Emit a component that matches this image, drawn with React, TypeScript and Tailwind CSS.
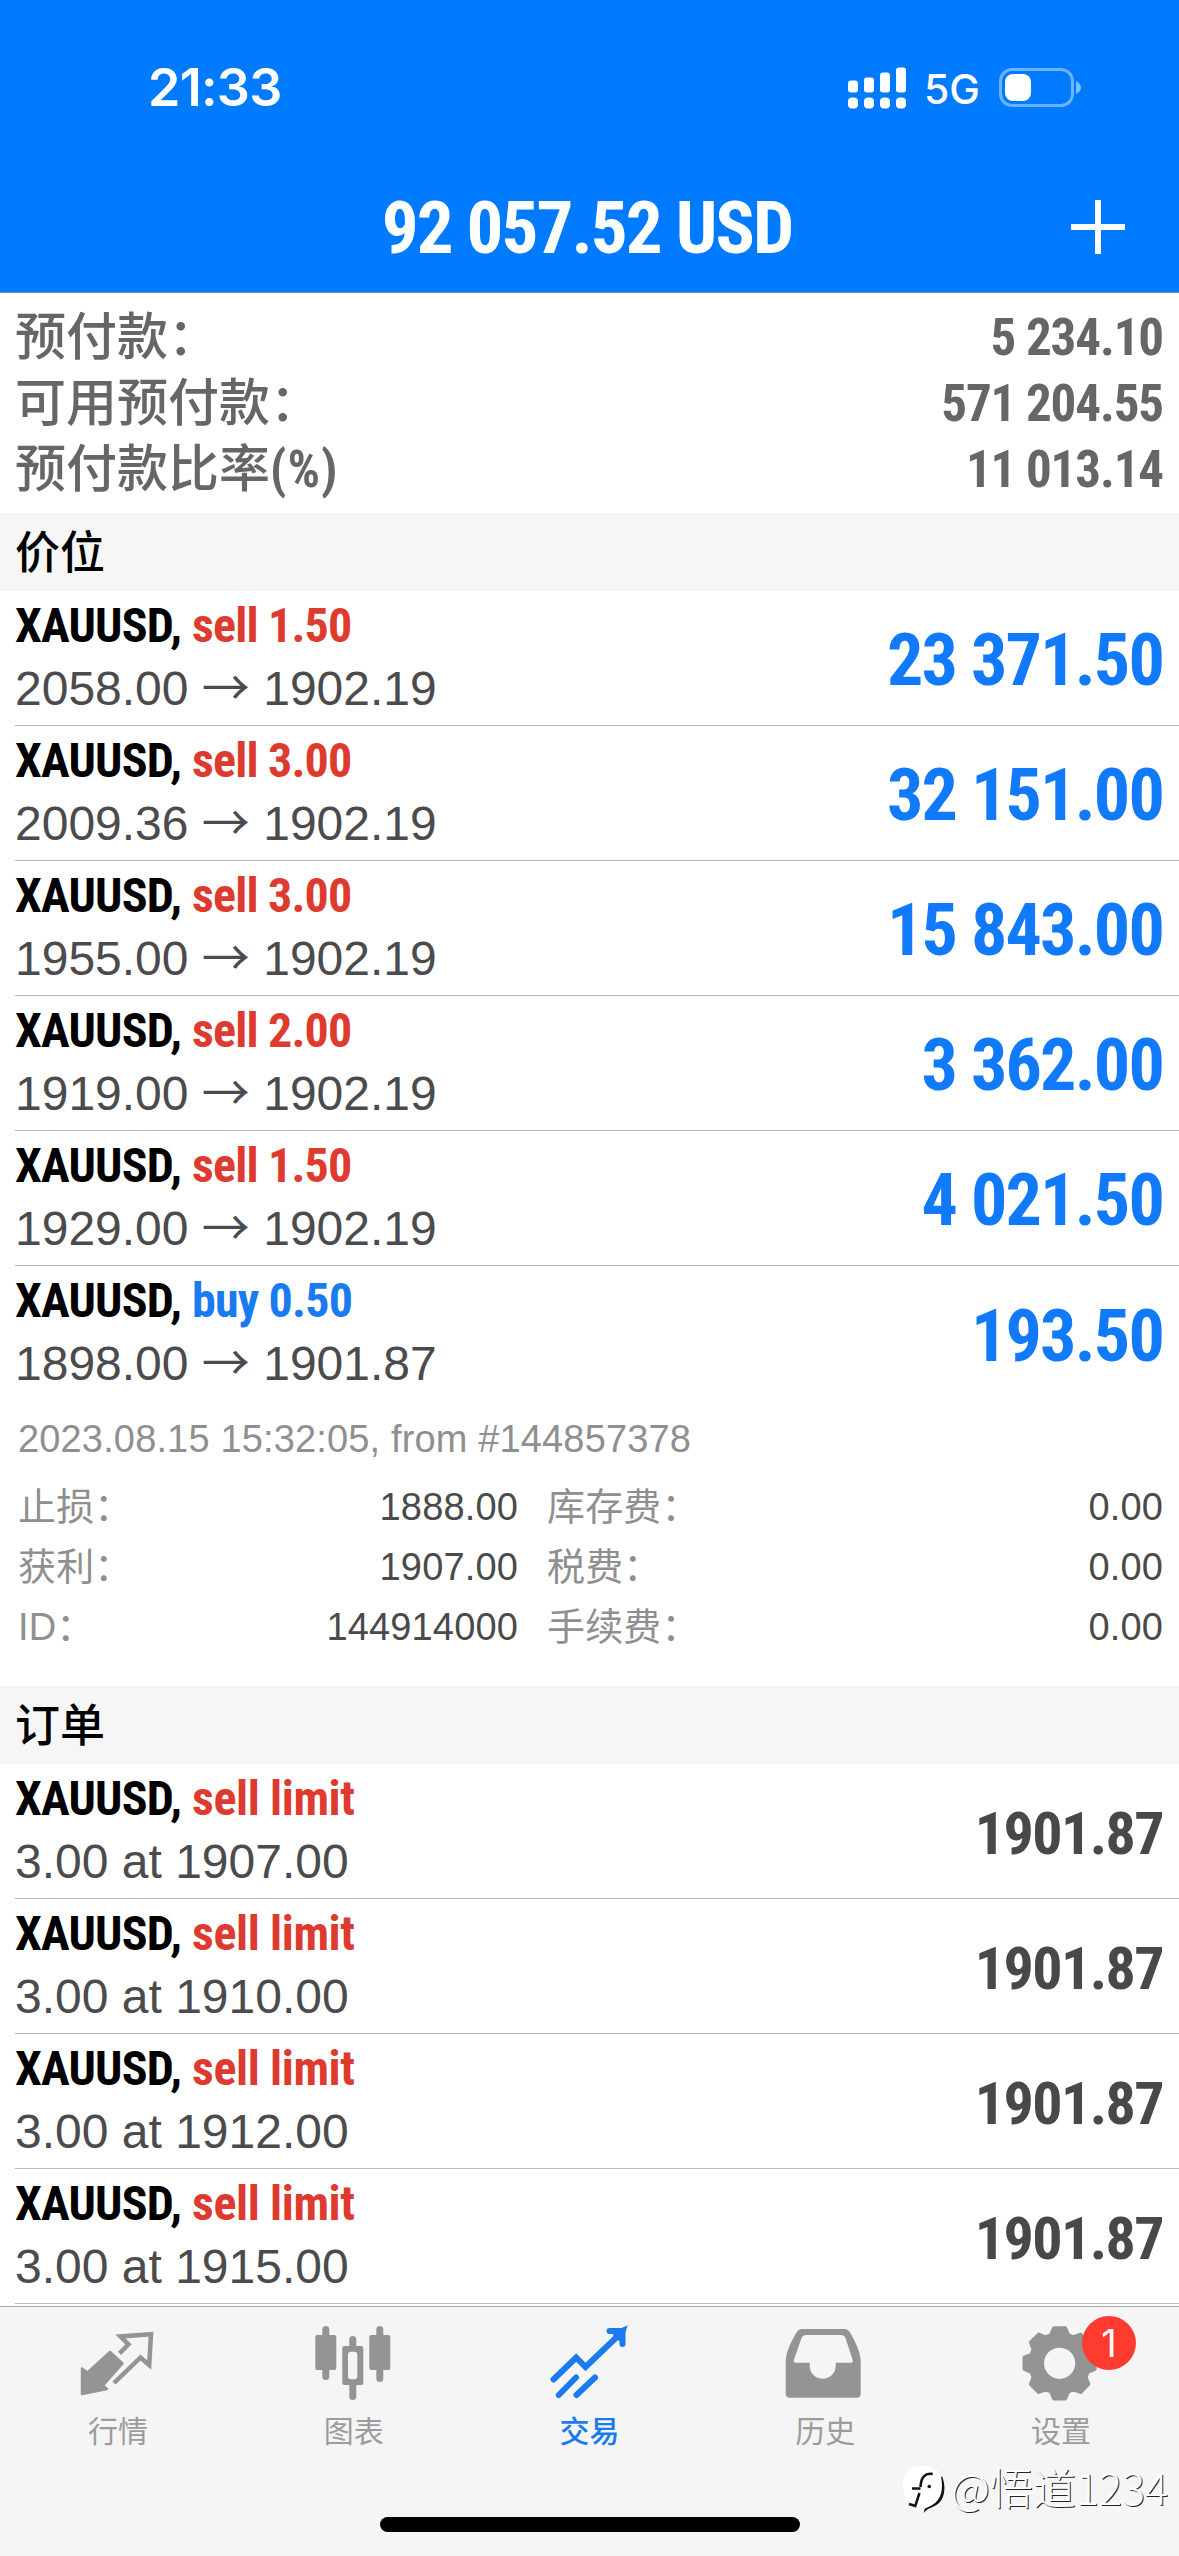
import { ReactNode } from "react";

interface Position {
  action: string;
  side: "sell" | "buy";
  open: string;
  current: string;
  profit: string;
}

interface PendingOrder {
  volume: string;
  price: string;
  current: string;
}

const SUMMARY = [
  { label: "预付款：", value: "5 234.10" },
  { label: "可用预付款：", value: "571 204.55" },
  { label: "预付款比率", unit: "(%)", value: "11 013.14" },
];

const POSITIONS: Position[] = [
  { action: "sell 1.50", side: "sell", open: "2058.00", current: "1902.19", profit: "23 371.50" },
  { action: "sell 3.00", side: "sell", open: "2009.36", current: "1902.19", profit: "32 151.00" },
  { action: "sell 3.00", side: "sell", open: "1955.00", current: "1902.19", profit: "15 843.00" },
  { action: "sell 2.00", side: "sell", open: "1919.00", current: "1902.19", profit: "3 362.00" },
  { action: "sell 1.50", side: "sell", open: "1929.00", current: "1902.19", profit: "4 021.50" },
  { action: "buy 0.50", side: "buy", open: "1898.00", current: "1901.87", profit: "193.50" },
];

const DETAILS = [
  ["止损：", "1888.00", "库存费：", "0.00"],
  ["获利：", "1907.00", "税费：", "0.00"],
  ["ID：", "144914000", "手续费：", "0.00"],
];

const ORDERS: PendingOrder[] = [
  { volume: "3.00", price: "1907.00", current: "1901.87" },
  { volume: "3.00", price: "1910.00", current: "1901.87" },
  { volume: "3.00", price: "1912.00", current: "1901.87" },
  { volume: "3.00", price: "1915.00", current: "1901.87" },
];

const SIDE_COLORS = {
  sell: "text-[#de3b30]",
  buy: "text-[#1a7af0]",
};

const CONDENSED = "font-['Roboto_Condensed','Noto_Sans_CJK_SC',sans-serif] font-bold";
const REGULAR = "font-['Liberation_Sans','Noto_Sans_CJK_SC',sans-serif]";

// 8-tooth gear outline
function gearPath(cx: number, cy: number): string {
  const points: string[] = [];
  for (let i = 0; i < 8; i++) {
    for (const [offset, r] of [[-17, 29.5], [-9, 35.5], [9, 35.5], [17, 29.5]]) {
      const a = ((i * 45 + offset - 90) * Math.PI) / 180;
      points.push(`${(cx + r * Math.cos(a)).toFixed(1)} ${(cy + r * Math.sin(a)).toFixed(1)}`);
    }
  }
  return `M${points.join("L")}Z`;
}

function QuotesIcon() {
  return (
    <svg viewBox="0 0 80 80" className="size-20" strokeLinejoin="round">
      <path
        d="M4 46.500L9.500 50.500 32 30 44.500 41.500 25 63.300 29 67 4 72Z"
        fill="currentColor"
        stroke="currentColor"
        strokeWidth="2.5"
      />
      <path
        d="M41.500 31.300L50.500 22.300 42.500 14.500 73 12.300 71.200 43 62.500 35.500 36 61"
        fill="none"
        stroke="currentColor"
        strokeWidth="4.500"
        strokeLinejoin="miter"
      />
    </svg>
  );
}

function ChartIcon() {
  return (
    <svg viewBox="0 0 80 80" className="size-20" fill="currentColor">
      <rect x="1.3" y="13" width="21" height="35" rx="2" />
      <rect x="8.3" y="4" width="7" height="54" rx="3.5" />
      <path
        fillRule="evenodd"
        d="M30.3 24h17a2 2 0 0 1 2 2v35a2 2 0 0 1-2 2h-17a2 2 0 0 1-2-2v-35a2 2 0 0 1 2-2ZM37 29.7a3 3 0 0 0-3 3v21.6a3 3 0 0 0 3 3h3.3a3 3 0 0 0 3-3v-21.6a3 3 0 0 0-3-3Z"
      />
      <path d="M35.3 26v-8.5a3.5 3.5 0 0 1 7 0v8.5ZM35.3 61v13.5a3.5 3.5 0 0 0 7 0v-13.5Z" />
      <rect x="55.3" y="13" width="21" height="35" rx="2" />
      <rect x="62.3" y="4" width="7" height="56" rx="3.5" />
    </svg>
  );
}

function TradeIcon() {
  return (
    <svg viewBox="0 0 80 80" className="size-20" fill="none" stroke="currentColor" strokeWidth="6" strokeLinecap="round">
      <path d="M4.500 57.500L27.200 35.500 36.500 45 72 11" />
      <path d="M60.500 9H73.500V22" />
      <path d="M67 12L73.500 9 71 16" />
      <path d="M9.800 73L27 55.500M27.500 73L46 55.500" />
    </svg>
  );
}

function HistoryIcon() {
  return (
    <svg viewBox="0 0 80 80" className="size-20" fill="currentColor">
      <path
        fillRule="evenodd"
        d="M17 7H59.5Q63 7 65 10.5C70 19 75.7 30 75.7 40V71.5Q75.7 75.7 71.5 75.7H5Q.7 75.7 .7 71.5V40C.7 30 6.500 19 11.500 10.500Q13.500 7 17 7ZM21 13Q18 13 16.500 16L9 37.500Q8 40.700 11 40.700H24.700V43.700A13 13 0 0 0 50.700 43.700V40.700H65.500Q68.500 40.700 67.500 37.500L60.500 16Q59 13 56 13Z"
      />
    </svg>
  );
}

function SettingsIcon() {
  return (
    <svg viewBox="0 0 80 80" className="size-20">
      <path d={gearPath(38.6, 41.3)} fill="currentColor" stroke="currentColor" strokeWidth="4" strokeLinejoin="round" />
      <circle cx="38.6" cy="41.3" r="15.6" fill="#f5f5f5" />
    </svg>
  );
}

function StatusBar() {
  return (
    <div className="flex h-[174px] items-start justify-between pt-[56px] pr-[96px] pl-[148px] text-white">
      <div className="h-16 font-['Inter',sans-serif] text-[52px] leading-[64px] font-semibold tracking-[-0.7px]">
        21:33
      </div>
      <div className="flex h-16 items-center">
        <svg viewBox="0 0 58 42" className="h-[42px] w-[58px]" fill="currentColor">
          {[12, 15, 20, 25].map((h, i) => (
            <g key={h}>
              <rect x={i * 16} y={25.5 - h} width="10" height={h} rx="3" />
              <rect x={i * 16} y="30.5" width="10" height="11" rx="4" />
            </g>
          ))}
        </svg>
        <span className="ml-[18px] w-[56px] pt-[2px] font-['Inter',sans-serif] text-[41px] leading-none font-medium">5G</span>
        <svg viewBox="0 0 84 40" className="ml-[19px] h-10 w-[84px]" fill="none">
          <rect x="1.5" y="1.5" width="72" height="36" rx="11.5" stroke="#fff" strokeOpacity=".42" strokeWidth="3" />
          <rect x="6" y="6" width="26" height="27" rx="8" fill="#fff" />
          <path d="M77 13Q82 16 82 19.5T77 26Z" fill="#fff" fillOpacity=".5" />
        </svg>
      </div>
    </div>
  );
}

function Header() {
  return (
    <header className="h-[293px] border-b border-[#5b8fc9] bg-[#007bff]">
      <StatusBar />
      <div className="grid h-[106px] grid-cols-[1fr_auto_1fr] items-center pr-[54px] pl-[49px] text-white">
        <span />
        <h1 className={`${CONDENSED} pt-[2px] text-[73px] leading-none tracking-[-1.9px]`}>92 057.52 USD</h1>
        <svg viewBox="0 0 54 54" className="size-[54px] justify-self-end" stroke="currentColor" strokeWidth="6">
          <path d="M27 0V54M0 27H54" />
        </svg>
      </div>
    </header>
  );
}

function SectionTitle({ children }: { children: ReactNode }) {
  return (
    <h2 className={`${REGULAR} h-[78px] bg-[#f6f6f6] pt-[2px] pl-[15px] text-[45px] leading-[78px] font-medium text-black`}>
      {children}
    </h2>
  );
}

interface RowProps {
  action: string;
  side: "sell" | "buy";
  pending?: boolean;
  divider?: boolean;
  value: ReactNode;
  children: ReactNode;
}

function Row({ action, side, pending, divider = true, value, children }: RowProps) {
  return (
    <div className="h-[135px] pl-[15px]">
      <div className={`flex h-full items-center justify-between pr-4 ${divider ? "border-b border-[#b9b9bc]" : ""}`}>
        <div className="h-full pt-[3px]">
          <div className={`${CONDENSED} flex h-16 text-[48px] leading-[64px]`}>
            <span className="w-[177px] tracking-[-0.8px] text-black">XAUUSD,</span>
            <span className={`${SIDE_COLORS[side]} ${pending ? "tracking-[-0.4px]" : "tracking-[-0.8px]"}`}>{action}</span>
          </div>
          <div className={`${REGULAR} h-16 text-[48px] leading-[62px] text-[#4b4b4d]`}>{children}</div>
        </div>
        {value}
      </div>
    </div>
  );
}

const TABS = [
  { label: "行情", icon: <QuotesIcon /> },
  { label: "图表", icon: <ChartIcon /> },
  { label: "交易", icon: <TradeIcon />, active: true },
  { label: "历史", icon: <HistoryIcon /> },
  { label: "设置", icon: <SettingsIcon />, badge: 1 },
];

function TabBar() {
  return (
    <nav className="relative mt-[2px] flex h-[250px] flex-col items-center border-t border-[#a8a8a8] bg-[#f5f5f5]">
      <div className="grid w-full grid-cols-5 pt-[15px]">
        {TABS.map((tab) => (
          <div
            key={tab.label}
            className={`flex flex-col items-center ${tab.active ? "text-[#1a7af0]" : "text-[#949494]"}`}
          >
            <div className="relative">
              {tab.icon}
              {tab.badge && (
                <span className="absolute top-[-6px] left-[61px] flex size-[54px] items-center justify-center rounded-full bg-[#ff3b30] font-['Inter',sans-serif] text-[38px] leading-none text-white">
                  {tab.badge}
                </span>
              )}
            </div>
            <span
              className={`mt-[5px] font-['Noto_Sans_CJK_SC',sans-serif] text-[30px] leading-[44px] ${tab.active ? "font-medium" : "text-[#9c9c9c]"}`}
            >
              {tab.label}
            </span>
          </div>
        ))}
      </div>
      <div className="mt-[66px] h-[15px] w-[420px] rounded-full bg-black" />
      <div className="absolute right-[11px] bottom-[36px] flex items-center">
        <svg viewBox="0 0 46 52" className="mr-[3px] h-[52px] w-[46px]">
          <path d="M40 12C44 22 43 33 37 39C32 44 26 43 22 49L23 40Z" fill="#111" />
          <path d="M20 2C35 2 40 9 40 21C40 34 35 40 22 45L21 41C7 41 1 34 1 22C1 9 7 2 20 2Z" fill="#fff" />
          <path d="M30.7 10C23 9 19 13 18.500 23M10 24.500H18.500M17.500 29L13.300 42 7 40" fill="none" stroke="#111" strokeWidth="2.5" />
          <circle cx="27.3" cy="22.5" r="1.800" fill="#111" />
        </svg>
        <span className={`${REGULAR} font-['Noto_Sans_CJK_SC',sans-serif] pb-[8px] text-[43px] leading-[52px] font-light text-white [text-shadow:1px_1px_0_#222]`}>
          @悟道1234
        </span>
      </div>
    </nav>
  );
}

export default function App() {
  return (
    <div className="flex h-[2556px] w-[1179px] flex-col overflow-hidden bg-white">
      <Header />

      <section className="h-[220px] pt-[12px] pr-4 pl-[15px] text-[51px] leading-[66px] text-[#666]">
        {SUMMARY.map((item) => (
          <div key={item.label} className="flex h-[66px] justify-between">
            <span className={`${REGULAR} flex font-medium`}>
              {item.label}
              {item.unit && <span className={`${CONDENSED} tracking-[1px]`}>{item.unit}</span>}
            </span>
            <span className={`${CONDENSED} tracking-[-1.1px]`}>{item.value}</span>
          </div>
        ))}
      </section>

      <SectionTitle>价位</SectionTitle>
      {POSITIONS.map((p, i) => (
        <Row
          key={p.open}
          action={p.action}
          side={p.side}
          divider={i < POSITIONS.length - 1}
          value={
            <span className={`${CONDENSED} pt-[6px] text-[72px] leading-none tracking-[-1.8px] text-[#107afa]`}>
              {p.profit}
            </span>
          }
        >
          {p.open} <span className="font-['Noto_Sans_CJK_SC',sans-serif] leading-[0]">→</span> {p.current}
        </Row>
      ))}

      <section className={`${REGULAR} h-[285px] pt-2 pr-4 pl-[18px] text-[38px] tracking-[0.15px] text-[#8f8f8f]`}>
        <p className="mb-2 h-[60px] leading-[60px]">2023.08.15 15:32:05, from #144857378</p>
        {DETAILS.map(([label, value, feeLabel, fee]) => (
          <div key={label} className="grid h-[60px] grid-cols-[500px_1fr] gap-x-[29px] leading-[60px]">
            <div className="flex justify-between">
              <span>{label}</span>
              <span className="text-[#4a4a4a]">{value}</span>
            </div>
            <div className="flex justify-between">
              <span>{feeLabel}</span>
              <span className="text-[#4a4a4a]">{fee}</span>
            </div>
          </div>
        ))}
      </section>

      <SectionTitle>订单</SectionTitle>
      {ORDERS.map((o) => (
        <Row
          key={o.price}
          action="sell limit"
          side="sell"
          pending
          value={
            <span className={`${CONDENSED} pt-[6px] text-[60px] leading-none tracking-[-1.6px] text-[#48484a]`}>
              {o.current}
            </span>
          }
        >
          {o.volume} at {o.price}
        </Row>
      ))}

      <TabBar />
    </div>
  );
}
